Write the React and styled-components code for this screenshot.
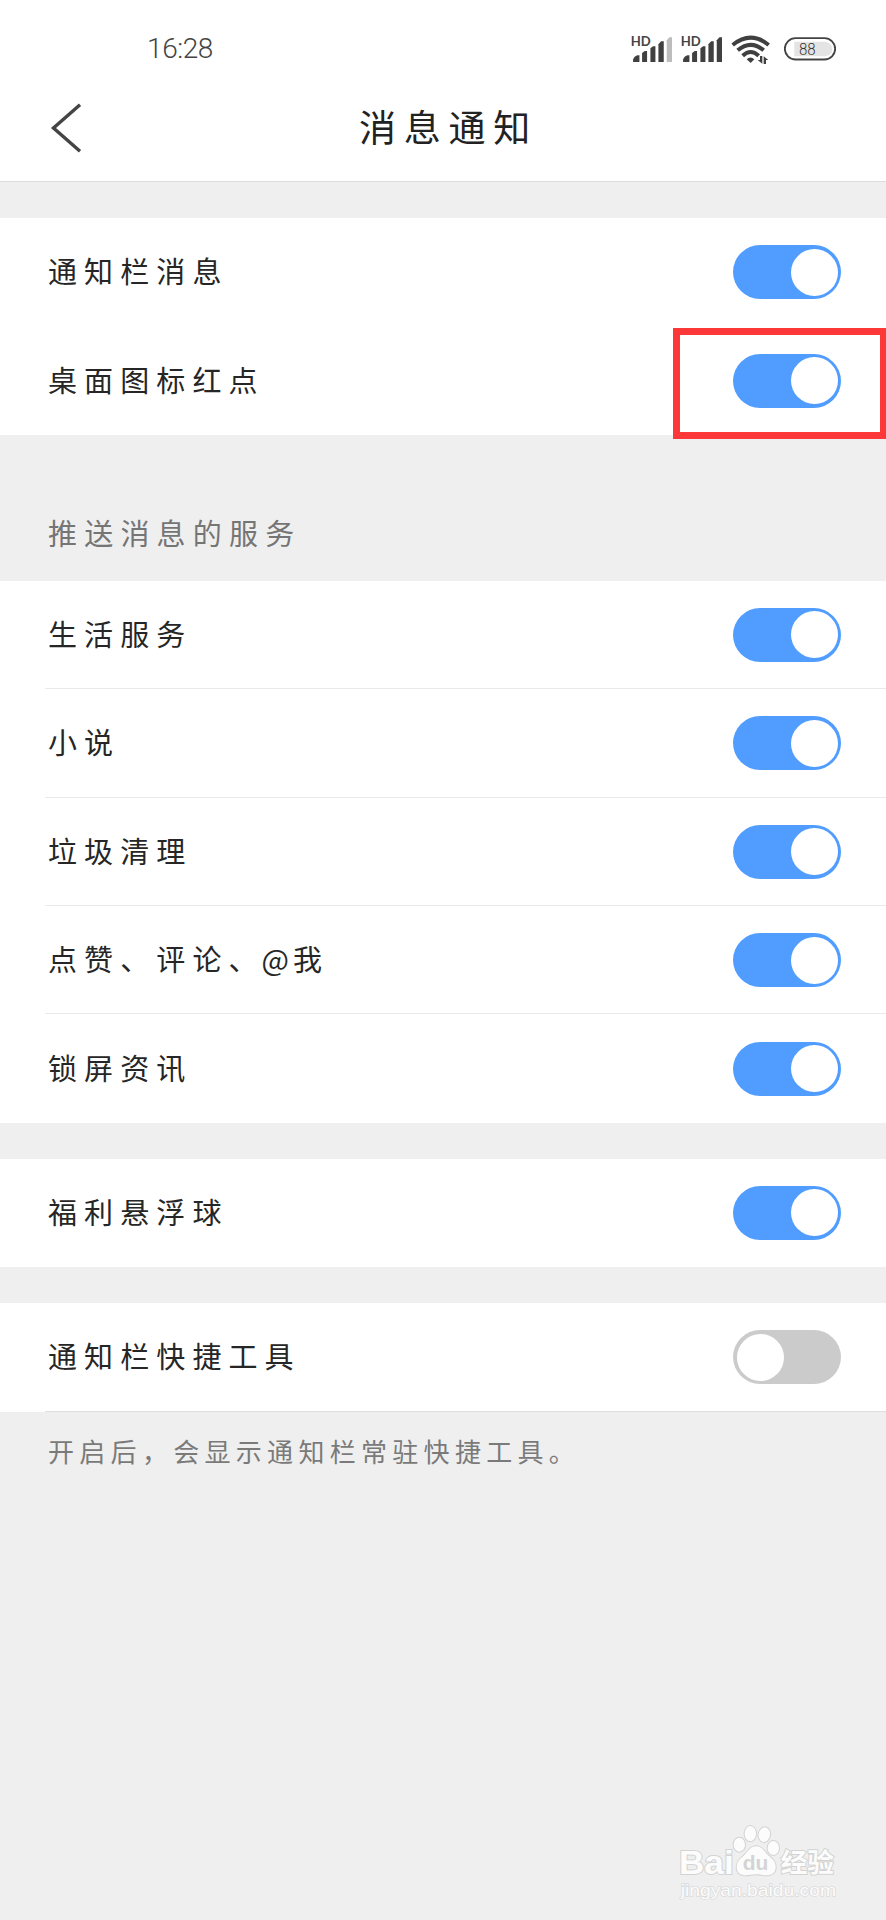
import React, { useState } from "react";
import styled, { createGlobalStyle } from "styled-components";

const GlobalStyle = createGlobalStyle`
	* {
		box-sizing: border-box;
	}

	body {
		margin: 0;
		background: #efefef;
		font-family: "Noto Sans CJK SC", sans-serif;
	}
`;

const Page = styled.div`
	position: relative;
	width: 886px;
	height: 1920px;
	overflow: hidden;
	background: #efefef;
`;

const Header = styled.header`
	height: 182px;
	background: #fff;
	border-bottom: 1px solid #dcdcdc;
`;

const StatusBar = styled.div`
	display: flex;
	align-items: center;
	height: 74px;
	padding: 24px 50.5px 0 147px;

	.time {
		margin-right: auto;
		font-family: Roboto, sans-serif;
		font-size: 28px;
		font-weight: 300;
		line-height: 50px;
		letter-spacing: -0.4px;
		color: #444;
	}

	svg {
		display: block;
	}

	.signal {
		margin-right: 8.5px;
	}

	.wifi {
		margin-right: 14px;
	}
`;

const NavBar = styled.div`
	display: grid;
	grid-template-columns: 120px 1fr 120px;
	align-items: center;
	height: 107px;

	h1 {
		margin: -3px -11px 0 0;
		text-align: center;
		font-size: 37px;
		font-weight: 400;
		line-height: 54px;
		letter-spacing: 7.8px;
		color: #222;
	}
`;

const BackButton = styled.button`
	display: flex;
	width: 84px;
	padding: 0 0 0 50px;
	border: none;
	background: none;
`;

const Group = styled.section`
	margin-top: ${props => props.gap || 0}px;
	background: #fff;
`;

const RowWrapper = styled.div`
	display: flex;
	align-items: center;
	justify-content: space-between;
	height: 108.4px;
	margin-left: 45px;
	padding-right: 45px;
	border-bottom: 1px solid ${props => props.line || "transparent"};
`;

const Label = styled.span`
	padding: 0 0 3px 3px;
	font-size: 29px;
	font-weight: 400;
	line-height: 44px;
	letter-spacing: 7.1px;
	color: #262626;

	.tight {
		letter-spacing: 4px;
	}
`;

const SectionTitle = styled.h2`
	height: 146px;
	margin: 0;
	padding: 75px 0 0 48px;
	font-size: 29px;
	font-weight: 400;
	line-height: 44px;
	letter-spacing: 7.2px;
	color: #757575;
`;

const Hint = styled.p`
	margin: 0;
	padding: 19px 0 0 48px;
	font-size: 26px;
	font-weight: 400;
	line-height: 40px;
	letter-spacing: 5.3px;
	color: #7a7a7a;
`;

const Switch = styled.button`
	display: flex;
	justify-content: ${props => (props.$on ? "flex-end" : "flex-start")};
	align-items: center;
	width: 108px;
	height: 54px;
	margin-top: 1px;
	padding: 0 3.5px;
	border: none;
	border-radius: 27px;
	background: ${props => (props.$on ? "#509dff" : "#cbcbcb")};

	&::after {
		content: "";
		width: 47px;
		height: 47px;
		border-radius: 50%;
		background: #fff;
	}
`;

// red frame laid over the desktop badge switch
const Highlight = styled.div`
	position: absolute;
	top: 328px;
	right: 0;
	width: 213px;
	height: 111px;
	border: 7px solid #fd3838;
	border-right-width: 6px;
`;

const Watermark = styled.svg`
	position: absolute;
	left: 678px;
	top: 1823px;
`;

const Signal = ({ weak }) => (
	<svg className="signal" width="41.5" height="30" viewBox="90 70 124 90">
		<text
			x="89"
			y="105"
			fontFamily="Lato, sans-serif"
			fontSize="39"
			fontWeight="700"
			textLength="60"
			lengthAdjust="spacingAndGlyphs"
			fill="#444"
		>
			HD
		</text>
		<g fill="#404040">
			<path d="M96 154v-7q2-9 13-13h6v20z" />
			<path d="M123 154v-27l8-6h7v33z" />
			<path d="M148 154v-41l8-6h7v47z" />
			<path d="M172 154v-53l8-9h8v62z" />
			<path d="M197 154v-65l8-9h8v74z" fill={weak ? "#bdbdbd" : "#404040"} />
		</g>
	</svg>
);

const WifiIcon = () => (
	<svg className="wifi" width="39" height="30" viewBox="391 70 117 90">
		<g fill="none" stroke="#404040" strokeWidth="12">
			<path d="M396 103q54-44 108 0" />
			<path d="M411 119q39-33 78 0" />
			<path d="M426 135q24-22 48 0" />
		</g>
		<path d="M438 146q11-11 23 0l-11 11z" fill="#404040" />
		<path
			d="M485 136v23l-14-11h7v-12zM489 160v-23l14 11h-7v12z"
			fill="#404040"
		/>
	</svg>
);

const Battery = () => (
	<svg width="52" height="24" viewBox="549 80 156 72">
		<rect
			x="551.5"
			y="83.5"
			width="151"
			height="64"
			rx="32"
			fill="#fff"
			stroke="#444"
			strokeWidth="5.5"
		/>
		<path d="M580 94h93q21 4 21 22t-21 22h-93z" fill="#e4e4e4" />
		<text
			x="594"
			y="134"
			fontFamily="Roboto, sans-serif"
			fontSize="48"
			fontWeight="300"
			textLength="50"
			lengthAdjust="spacingAndGlyphs"
			fill="#333"
		>
			88
		</text>
	</svg>
);

const BaiduMark = () => (
	<Watermark width="160" height="80" viewBox="54 69 480 240">
		<g
			fill="#fcfcfc"
			stroke="#d3d3d3"
			strokeWidth="6"
			paintOrder="stroke"
			fontFamily="Liberation Sans, sans-serif"
		>
			<text
				x="57"
				y="221"
				fontSize="100"
				fontWeight="700"
				textLength="164"
				lengthAdjust="spacingAndGlyphs"
			>
				Bai
			</text>
			<ellipse cx="238" cy="134" rx="17" ry="21" />
			<ellipse cx="271" cy="101" rx="17" ry="23" />
			<ellipse cx="313" cy="104" rx="17" ry="22" transform="rotate(10 313 104)" />
			<ellipse cx="340" cy="144" rx="17" ry="21" />
			<path d="M288 139c-17 0-24 15-34 25s-24 17-24 37c0 18 12 25 27 25 12 0 19-3 31-3s19 3 31 3c16 0 28-8 28-25 0-19-14-27-24-37s-17-25-35-25z" />
			<text
				x="362"
				y="215"
				fontFamily="Noto Sans CJK SC, sans-serif"
				fontSize="80"
				fontWeight="700"
				textLength="160"
				lengthAdjust="spacingAndGlyphs"
			>
				经验
			</text>
			<text
				x="62"
				y="287"
				fontSize="50"
				strokeWidth="4"
				stroke="#dadada"
				textLength="466"
				lengthAdjust="spacingAndGlyphs"
			>
				jingyan.baidu.com
			</text>
		</g>
		<text
			x="248"
			y="211"
			fontFamily="Liberation Sans, sans-serif"
			fontSize="62"
			fontWeight="700"
			textLength="77"
			lengthAdjust="spacingAndGlyphs"
			fill="#d4d4d4"
		>
			du
		</text>
	</Watermark>
);

const SettingRow = ({ label, children, line, off }) => {
	const [on, setOn] = useState(!off);

	return (
		<RowWrapper line={line}>
			<Label>{children || label}</Label>
			<Switch
				$on={on}
				role="switch"
				aria-checked={on}
				aria-label={label}
				onClick={() => setOn(!on)}
			/>
		</RowWrapper>
	);
};

const divider = "#e9e9e9";

const App = () => (
	<>
		<GlobalStyle />
		<Page>
			<Header>
				<StatusBar>
					<span className="time">16:28</span>
					<Signal weak />
					<Signal />
					<WifiIcon />
					<Battery />
				</StatusBar>
				<NavBar>
					<BackButton aria-label="返回">
						<svg width="32" height="50" viewBox="0 0 32 50">
							<path
								d="M30 1.8 3.5 25 30 48.2"
								fill="none"
								stroke="#444"
								strokeWidth="3.4"
							/>
						</svg>
					</BackButton>
					<h1>消息通知</h1>
				</NavBar>
			</Header>

			<Group gap={36}>
				<SettingRow label="通知栏消息" />
				<SettingRow label="桌面图标红点" />
			</Group>

			<SectionTitle>推送消息的服务</SectionTitle>
			<Group>
				<SettingRow label="生活服务" line={divider} />
				<SettingRow label="小说" line={divider} />
				<SettingRow label="垃圾清理" line={divider} />
				<SettingRow label="点赞、评论、@我" line={divider}>
					点赞、评论<span className="tight">、@</span>我
				</SettingRow>
				<SettingRow label="锁屏资讯" />
			</Group>

			<Group gap={36}>
				<SettingRow label="福利悬浮球" />
			</Group>

			<Group gap={36}>
				<SettingRow label="通知栏快捷工具" line="#dedede" off />
			</Group>
			<Hint>开启后，会显示通知栏常驻快捷工具。</Hint>

			<Highlight />
			<BaiduMark />
		</Page>
	</>
);

export default App;
